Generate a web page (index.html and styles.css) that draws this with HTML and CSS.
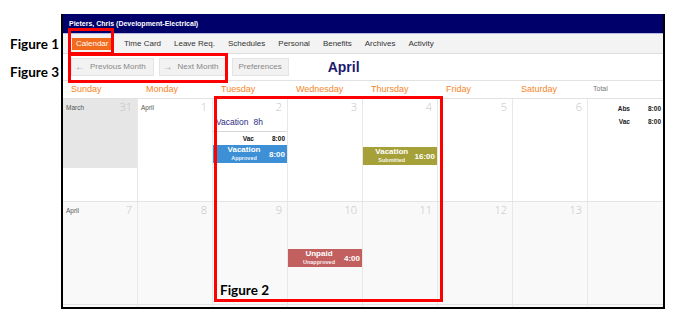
FILE: index.html
```html
<!DOCTYPE html>
<html>
<head>
<meta charset="utf-8">
<link rel="stylesheet" href="styles.css">
</head>
<body>
<div class="page">
  <div class="frame">
    <div class="hdr">Pieters, Chris (Development-Electrical)</div>
    <nav class="tabs">
      <span class="tab active">Calendar</span>
      <span class="tab">Time Card</span>
      <span class="tab">Leave Req.</span>
      <span class="tab">Schedules</span>
      <span class="tab">Personal</span>
      <span class="tab">Benefits</span>
      <span class="tab">Archives</span>
      <span class="tab">Activity</span>
    </nav>
    <div class="toolbar">
      <span class="btn"><span class="arr">&#8592;</span>Previous Month</span>
      <span class="btn"><span class="arr">&#8594;</span>Next Month</span>
      <span class="btn plain">Preferences</span>
      <span class="month">April</span>
    </div>
    <div class="grid">
      <div class="dh">Sunday</div>
      <div class="dh">Monday</div>
      <div class="dh">Tuesday</div>
      <div class="dh">Wednesday</div>
      <div class="dh">Thursday</div>
      <div class="dh">Friday</div>
      <div class="dh">Saturday</div>
      <div class="dh total">Total</div>

      <div class="cell">
        <div class="other">
          <div class="ctop"><span class="mon">March</span><span class="num">31</span></div>
        </div>
      </div>
      <div class="cell">
        <div class="ctop"><span class="mon">April</span><span class="num">1</span></div>
      </div>
      <div class="cell">
        <div class="ctop"><span class="mon"></span><span class="num">2</span></div>
        <div class="summary">Vacation<span class="hrs">8h</span></div>
        <div class="detail"><span class="dlab">Vac</span><span class="dval">8:00</span></div>
        <div class="ev blue"><div class="evtxt"><b>Vacation</b><small>Approved</small></div><span class="evtime">8:00</span></div>
      </div>
      <div class="cell">
        <div class="ctop"><span class="mon"></span><span class="num">3</span></div>
      </div>
      <div class="cell">
        <div class="ctop"><span class="mon"></span><span class="num">4</span></div>
        <div class="ev olive gap34"><div class="evtxt"><b>Vacation</b><small>Submitted</small></div><span class="evtime">16:00</span></div>
      </div>
      <div class="cell">
        <div class="ctop"><span class="mon"></span><span class="num">5</span></div>
      </div>
      <div class="cell">
        <div class="ctop"><span class="mon"></span><span class="num">6</span></div>
      </div>
      <div class="cell tot">
        <div class="trow"><span class="tlab">Abs</span><span class="tval">8:00</span></div>
        <div class="trow"><span class="tlab">Vac</span><span class="tval">8:00</span></div>
      </div>

      <div class="cell r2">
        <div class="ctop"><span class="mon">April</span><span class="num">7</span></div>
      </div>
      <div class="cell r2">
        <div class="ctop"><span class="mon"></span><span class="num">8</span></div>
      </div>
      <div class="cell r2">
        <div class="ctop"><span class="mon"></span><span class="num">9</span></div>
      </div>
      <div class="cell r2">
        <div class="ctop"><span class="mon"></span><span class="num">10</span></div>
        <div class="ev red gap33"><div class="evtxt"><b>Unpaid</b><small>Unapproved</small></div><span class="evtime">4:00</span></div>
      </div>
      <div class="cell r2">
        <div class="ctop"><span class="mon"></span><span class="num">11</span></div>
      </div>
      <div class="cell r2">
        <div class="ctop"><span class="mon"></span><span class="num">12</span></div>
      </div>
      <div class="cell r2">
        <div class="ctop"><span class="mon"></span><span class="num">13</span></div>
      </div>
      <div class="cell r2 tot"></div>

      <div class="cell r3"></div>
      <div class="cell r3"></div>
      <div class="cell r3"></div>
      <div class="cell r3"></div>
      <div class="cell r3"></div>
      <div class="cell r3"></div>
      <div class="cell r3"></div>
      <div class="cell r3 tot"></div>
    </div>
  </div>

  <div class="fig-label fl1">Figure 1</div>
  <div class="fig-label fl3">Figure 3</div>
  <div class="redbox rb1"></div>
  <div class="redbox rb3"></div>
  <div class="redbox rb2"><span class="fig-label fl2">Figure 2</span></div>
</div>
</body>
</html>
```

FILE: styles.css
```css
* { box-sizing: border-box; }
html, body { margin: 0; padding: 0; background: #fff; }
body { font-family: "Liberation Sans", Arial, sans-serif; }

.page {
  position: relative;
  width: 681px;
  height: 322px;
  overflow: hidden;
  padding-top: 14px;
  padding-left: 61px;
}

.frame {
  width: 604px;
  height: 295px;
  border: 2px solid #000;
  border-top: none;
  overflow: hidden;
  background: #fff;
}

.hdr {
  height: 20px;
  line-height: 19px;
  background: #00006a;
  color: #fff;
  font-weight: bold;
  font-size: 7px;
  padding-left: 6px;
  border-bottom: 1px solid #b8b8e4;
}

.tabs {
  height: 20px;
  background: #f3f3f3;
  border-bottom: 1px solid #dcdcdc;
  display: flex;
  align-items: center;
  padding-left: 9px;
  font-size: 8px;
  color: #333;
}
.tab { padding: 0 6.5px; line-height: 12px; }
.tab.active {
  background: #f26a1b;
  color: #fff;
  padding: 0 4px;
  margin-right: 5px;
}

.toolbar {
  height: 26px;
  display: flex;
  align-items: flex-start;
  padding: 4px 0 0 8px;
  gap: 5px;
}
.btn {
  height: 18px;
  line-height: 18px;
  background: #f2f2f2;
  border: 1px solid #e4e4e4;
  font-size: 8px;
  color: #888;
  padding: 0 7px 0 3px;
  display: flex;
  align-items: center;
}
.btn.plain { padding: 0 6px; }
.arr { width: 9px; margin-right: 6px; font-size: 10px; color: #999; }
.month {
  margin-left: 34px;
  font-size: 14px;
  font-weight: bold;
  color: #1b1b6e;
  line-height: 18px;
}

.grid {
  display: grid;
  grid-template-columns: repeat(8, 75px);
  grid-template-rows: 18px 103px 103px 20px;
  border-top: 1px solid #e2e2e2;
}
.dh {
  font-size: 9px;
  color: #f5861f;
  padding-left: 8px;
  line-height: 16px;
  border-bottom: 1px solid #e2e2e2;
}
.dh.total { font-size: 7px; color: #777; padding-left: 5px; }

.cell {
  border-right: 1px solid #e8e8e8;
  border-bottom: 1px solid #e4e4e4;
  background: #fff;
  display: flex;
  flex-direction: column;
}
.cell.tot { border-right: none; }
.cell.r2, .cell.r3 { background: #f9f9f9; }
.other { background: #e6e6e6; height: 69px; }

.ctop {
  display: flex;
  justify-content: space-between;
  align-items: flex-start;
  height: 14px;
  padding: 2px 5px 0 3px;
}
.mon { font-size: 6.5px; color: #555; padding-top: 3px; }
.num {
  font-family: "Open Sans", sans-serif;
  font-weight: 300;
  font-size: 11px;
  line-height: 12px;
  color: #c4c4c4;
}

.summary {
  height: 19px;
  line-height: 18px;
  font-size: 8.5px;
  color: #2b2b86;
  padding-left: 3px;
  border-bottom: 1px solid #d8d8d8;
}
.hrs { margin-left: 5px; }
.detail {
  height: 13px;
  display: flex;
  justify-content: flex-end;
  align-items: center;
  font-size: 6.5px;
  font-weight: bold;
  color: #111;
  padding-right: 2px;
}
.dlab { margin-right: 18px; }

.ev {
  height: 18px;
  display: flex;
  align-items: center;
  color: #fff;
  padding-right: 2px;
}
.ev.blue { background: #3d8fd6; }
.ev.olive { background: #a6a039; }
.ev.red { background: #c25f5f; }
.gap34 { margin-top: 34px; }
.gap33 { margin-top: 33px; }
.evtxt {
  flex: 1;
  display: flex;
  flex-direction: column;
  align-items: center;
  line-height: 8px;
  padding-left: 6px;
}
.evtxt b { font-size: 8px; }
.evtxt small { font-size: 5.5px; font-weight: bold; opacity: 0.9; }
.evtime { font-size: 8px; font-weight: bold; }

.trow {
  display: flex;
  justify-content: flex-end;
  font-size: 6.5px;
  font-weight: bold;
  color: #222;
  height: 13px;
  line-height: 13px;
  padding-right: 2px;
}
.trow:first-child { margin-top: 3px; }
.tlab { margin-right: 18px; }

/* annotation overlays */
.fig-label {
  position: absolute;
  font-family: Lato, "Open Sans", sans-serif;
  font-weight: bold;
  font-size: 13.5px;
  color: #000;
  line-height: 14px;
}
.fl1 { left: 10px; top: 37px; }
.fl3 { left: 10px; top: 65px; }
.redbox {
  position: absolute;
  border: 3px solid #ff0000;
}
.rb1 { left: 68px; top: 28px; width: 46px; height: 27px; }
.rb3 { left: 68px; top: 53px; width: 160px; height: 30px; }
.rb2 { left: 214px; top: 96px; width: 229px; height: 206px; }
.fl2 { left: 3px; top: 184px; }
```
